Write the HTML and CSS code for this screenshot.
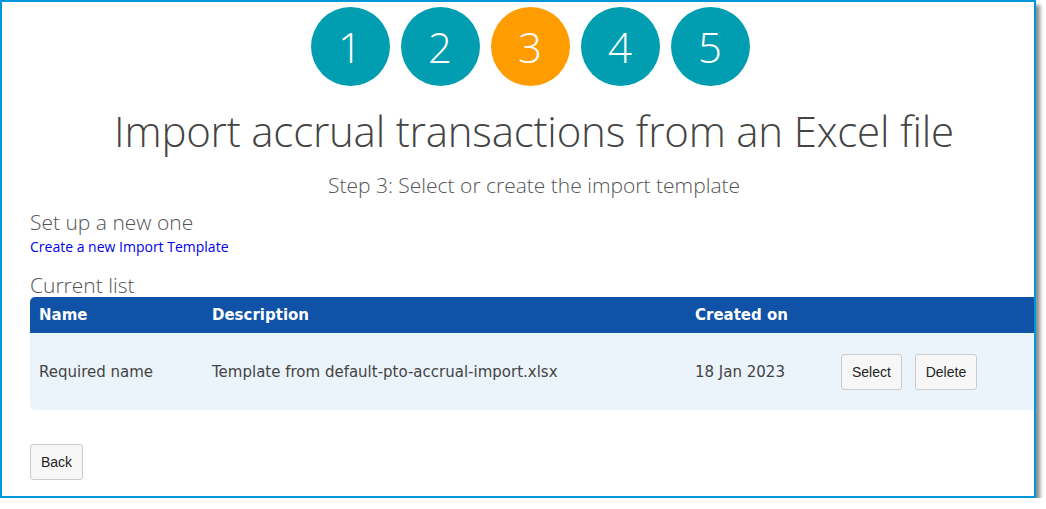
FILE: index.html
```html
<!DOCTYPE html>
<html lang="en">
  <head>
    <meta charset="UTF-8" />
    <meta name="viewport" content="width=device-width, initial-scale=1.0" />
    <title>Import accrual transactions</title>
    <link rel="stylesheet" href="styles.css">
  </head>
  <body>
    <div class="frame">
      <div class="page">
        <div class="steps">
          <span class="step">1</span>
          <span class="step">2</span>
          <span class="step active">3</span>
          <span class="step">4</span>
          <span class="step">5</span>
        </div>
        <h1>Import accrual transactions from an Excel file</h1>
        <p class="subtitle">Step 3: Select or create the import template</p>

        <h2>Set up a new one</h2>
        <a href="#" class="new-link">Create a new Import Template</a>

        <h2 class="list-title">Current list</h2>
        <table class="templates">
          <thead>
            <tr>
              <th class="col-name">Name</th>
              <th class="col-desc">Description</th>
              <th class="col-date">Created on</th>
              <th class="col-actions"></th>
            </tr>
          </thead>
          <tbody>
            <tr>
              <td>Required name</td>
              <td>Template from default-pto-accrual-import.xlsx</td>
              <td>18 Jan 2023</td>
              <td>
                <button class="btn">Select</button>
                <button class="btn">Delete</button>
              </td>
            </tr>
          </tbody>
        </table>

        <button class="btn back-btn">Back</button>
      </div>
    </div>
  </body>
</html>
```

FILE: styles.css
```css
* {
  margin: 0;
  padding: 0;
  box-sizing: border-box;
}
body {
  background-color: #fff;
  color: #444;
  font-family: "Open Sans", "Noto Sans", sans-serif;
}
.frame {
  width: 1036px;
  height: 498px;
  border: 2px solid #0096db;
  overflow: hidden;
  box-shadow: 4px 5px 4px rgba(0, 0, 0, 0.45);
}
.page {
  width: 1036px;
  padding-left: 28px;
}

/* wizard steps */
.steps {
  display: flex;
  justify-content: center;
  gap: 11px;
  padding-top: 5px;
  padding-right: 8px;
}
.step {
  width: 79px;
  height: 79px;
  border-radius: 50%;
  background-color: #009eb0;
  color: #fff;
  font-size: 42px;
  font-weight: 300;
  display: flex;
  align-items: center;
  justify-content: center;
}
.step.active {
  background-color: #ff9c00;
}

h1 {
  font-weight: 300;
  font-size: 42px;
  letter-spacing: -0.2px;
  color: #444;
  text-align: center;
  margin-top: 13px;
  line-height: 64px;
}
.subtitle {
  font-weight: 300;
  font-size: 21px;
  text-align: center;
  color: #555;
  margin-top: 8px;
  line-height: 28px;
}
h2 {
  font-weight: 300;
  font-size: 21px;
  color: #555;
  margin-top: 9px;
  line-height: 28px;
}
.new-link {
  display: block;
  font-size: 14px;
  color: #0000ee;
  text-decoration: none;
  line-height: 19px;
  margin-top: 1px;
}
.list-title {
  margin-top: 17px;
  line-height: 24px;
}

/* template table */
.templates {
  width: 100%;
  border-spacing: 0;
  font-family: "DejaVu Sans", Verdana, sans-serif;
  font-size: 15px;
  color: #444;
}
.templates th {
  background-color: #0f52a8;
  color: #fff;
  font-weight: bold;
  text-align: left;
  height: 36px;
  padding: 0 9px;
}
.templates th:first-child {
  border-top-left-radius: 5px;
}
.templates td {
  background-color: #ebf3fb;
  height: 77px;
  padding: 0 9px;
}
.templates td:first-child {
  border-bottom-left-radius: 5px;
}
.col-name {
  width: 173px;
}
.col-desc {
  width: 483px;
}
.col-date {
  width: 146px;
}
.btn {
  font-family: "Liberation Sans", Arial, sans-serif;
  font-size: 14px;
  color: #222;
  background-color: #f7f7f7;
  border: 1px solid #ccc;
  border-radius: 3px;
  height: 36px;
  padding: 0 10px;
  cursor: pointer;
}
.btn + .btn {
  margin-left: 8px;
}
.back-btn {
  margin-top: 34px;
}
```
